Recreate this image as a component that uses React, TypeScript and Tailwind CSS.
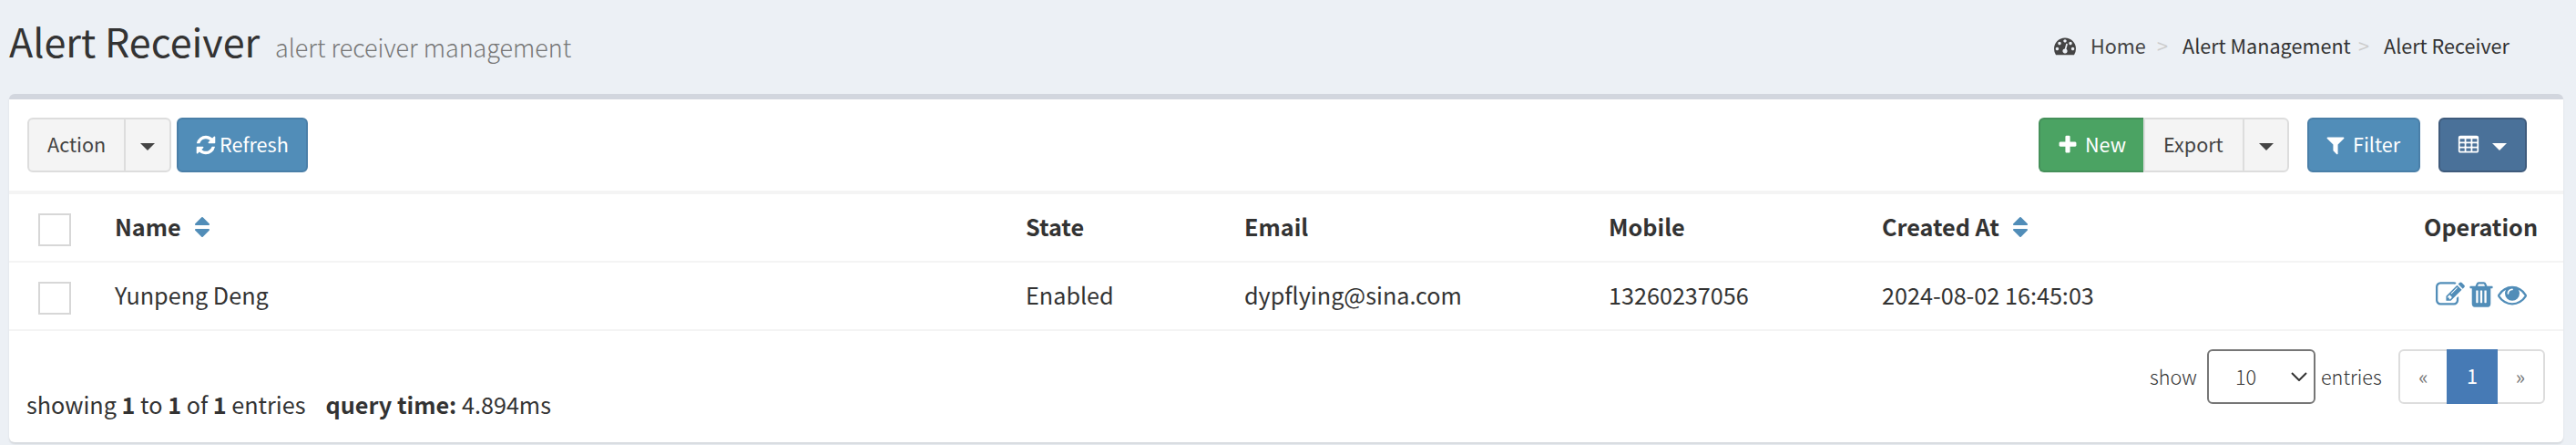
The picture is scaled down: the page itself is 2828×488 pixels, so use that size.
import React from "react";

const ICONS = {
  refresh:
    "M1639 1056q0 5-1 7-64 268-268 434.5t-478 166.5q-146 0-282.5-55t-243.5-157l-129 129q-19 19-45 19t-45-19-19-45v-448q0-26 19-45t45-19h448q26 0 45 19t19 45-19 45l-137 137q71 66 161 102t187 36q134 0 250-65t186-179q11-17 53-117 8-23 30-23h192q13 0 22.5 9.5t9.5 22.5zm25-800v448q0 26-19 45t-45 19h-448q-26 0-45-19t-19-45 19-45l138-138q-148-137-349-137-134 0-250 65t-186 179q-11 17-53 117-8 23-30 23h-199q-13 0-22.5-9.5t-9.5-22.5v-7q65-268 270-434.5t480-166.5q146 0 284 55.5t245 156.5l130-129q19-19 45-19t45 19 19 45z",
  plus: "M1600 736v192q0 40-28 68t-68 28h-416v416q0 40-28 68t-68 28h-192q-40 0-68-28t-28-68v-416h-416q-40 0-68-28t-28-68v-192q0-40 28-68t68-28h416v-416q0-40 28-68t68-28h192q40 0 68 28t28 68v416h416q40 0 68 28t28 68z",
  filter:
    "M1595 295q17 41-14 70l-493 493v742q0 42-39 59-13 5-25 5-27 0-45-19l-256-256q-19-19-19-45v-486l-493-493q-31-29-14-70 17-39 59-39h1280q42 0 59 39z",
  eye: "M1664 960q-152-236-381-353 61 104 61 225 0 185-131.5 316.5t-316.5 131.5-316.5-131.5-131.5-316.5q0-121 61-225-229 117-381 353 133 205 333.5 326.5t434.5 121.5 434.5-121.5 333.5-326.5zm-720-384q0-20-14-34t-34-14q-125 0-214.5 89.5t-89.5 214.5q0 20 14 34t34 14 34-14 14-34q0-86 61-147t147-61q20 0 34-14t14-34zm848 384q0 34-20 69-140 230-376.5 368.5t-499.5 138.5-499.5-139-376.5-368q-20-35-20-69t20-69q140-229 376.5-368t499.5-139 499.5 139 376.5 368q20 35 20 69z",
  trash:
    "M704 1376v-704q0-14-9-23t-23-9h-64q-14 0-23 9t-9 23v704q0 14 9 23t23 9h64q14 0 23-9t9-23zm256 0v-704q0-14-9-23t-23-9h-64q-14 0-23 9t-9 23v704q0 14 9 23t23 9h64q14 0 23-9t9-23zm256 0v-704q0-14-9-23t-23-9h-64q-14 0-23 9t-9 23v704q0 14 9 23t23 9h64q14 0 23-9t9-23zm-544-992h448l-48-117q-7-9-17-11h-317q-10 2-17 11zm928 32v64q0 14-9 23t-23 9h-96v948q0 83-47 143.5t-113 60.5h-832q-66 0-113-58.5t-47-141.5v-952h-96q-14 0-23-9t-9-23v-64q0-14 9-23t23-9h309l70-167q15-37 54-63t79-26h320q40 0 79 26t54 63l70 167h309q14 0 23 9t9 23z",
  edit: "M888 1184l116-116-152-152-116 116v56h96v96h56zm440-720q-16-16-33 1l-350 350q-17 17-1 33t33-1l350-350q17-17 1-33zm80 594v190q0 119-84.5 203.5t-203.5 84.5h-832q-119 0-203.5-84.5t-84.5-203.5v-832q0-119 84.5-203.5t203.5-84.5h832q63 0 117 25 15 7 18 23 3 17-9 29l-49 49q-14 14-32 8-23-6-45-6h-832q-66 0-113 47t-47 113v832q0 66 47 113t113 47h832q66 0 113-47t47-113v-126q0-13 9-22l64-64q15-15 35-7t20 29zm-96-738l288 288-672 672h-288v-288zm444 132l-92 92-288-288 92-92q28-28 68-28t68 28l152 152q28 28 28 68t-28 68z",
  dashboard:
    "M384 1152q0-53-37.5-90.5t-90.5-37.5-90.5 37.5-37.5 90.5 37.5 90.5 90.5 37.5 90.5-37.5 37.5-90.5zm192-448q0-53-37.5-90.5t-90.5-37.5-90.5 37.5-37.5 90.5 37.5 90.5 90.5 37.5 90.5-37.5 37.5-90.5zm428 481l101-382q6-26-7.5-48.5t-38.5-29.5-48 6.5-30 39.5l-101 382q-60 5-107 43.5t-63 98.5q-20 77 20 146t117 89 146-20 89-117q16-60-6-117t-72-91zm660-33q0-53-37.5-90.5t-90.5-37.5-90.5 37.5-37.5 90.5 37.5 90.5 90.5 37.5 90.5-37.5 37.5-90.5zm-640-640q0-53-37.5-90.5t-90.5-37.5-90.5 37.5-37.5 90.5 37.5 90.5 90.5 37.5 90.5-37.5 37.5-90.5zm448 192q0-53-37.5-90.5t-90.5-37.5-90.5 37.5-37.5 90.5 37.5 90.5 90.5 37.5 90.5-37.5 37.5-90.5zm320 448q0 261-141 483-19 29-54 29h-1402q-35 0-54-29-141-221-141-483 0-182 71-348t191-286 286-191 348-71 348 71 286 191 191 286 71 348z",
  sort: "M1408 1088q0 19-19 45l-448 448q-19 19-45 19t-45-19l-448-448q-19-19-19-45t19-45 45-19h896q26 0 45 19t19 45zm0-384q0 26-19 45t-45 19h-896q-26 0-45-19t-19-45 19-45l448-448q19-19 45-19t45 19l448 448q19 19 19 45z",
  table:
    "M224 128h1344q66 0 113 47t47 113v1088q0 66-47 113t-113 47h-1344q-66 0-113-47t-47-113v-1088q0-66 47-113t113-47zM224 384q-32 0-32 32v192q0 32 32 32h320q32 0 32-32v-192q0-32-32-32zM736 384q-32 0-32 32v192q0 32 32 32h320q32 0 32-32v-192q0-32-32-32zM1248 384q-32 0-32 32v192q0 32 32 32h320q32 0 32-32v-192q0-32-32-32zM224 768q-32 0-32 32v192q0 32 32 32h320q32 0 32-32v-192q0-32-32-32zM736 768q-32 0-32 32v192q0 32 32 32h320q32 0 32-32v-192q0-32-32-32zM1248 768q-32 0-32 32v192q0 32 32 32h320q32 0 32-32v-192q0-32-32-32zM224 1152q-32 0-32 32v192q0 32 32 32h320q32 0 32-32v-192q0-32-32-32zM736 1152q-32 0-32 32v192q0 32 32 32h320q32 0 32-32v-192q0-32-32-32zM1248 1152q-32 0-32 32v192q0 32 32 32h320q32 0 32-32v-192q0-32-32-32z",
};

function Icon({ name, className }: { name: keyof typeof ICONS; className: string }) {
  return (
    <svg viewBox="0 0 1792 1792" className={`shrink-0 fill-current ${className}`} fillRule={name === "table" ? "evenodd" : "nonzero"}>
      <path d={ICONS[name]} />
    </svg>
  );
}

function Caret() {
  return (
    <svg viewBox="0 0 16 8" className="h-2 w-4 shrink-0 fill-current">
      <path d="M0 0h16l-8 8z" />
    </svg>
  );
}

const COLS = "grid grid-cols-[116px_1000px_240px_400px_300px_595px_153px]";

function Checkbox() {
  return <div className="ml-8 size-9 border-2 border-[#d7d7d7] bg-white" />;
}

export default function App() {
  return (
    <div className="h-[488px] w-[2828px] overflow-hidden bg-[#ecf0f5] font-['Noto_Sans_CJK_SC',sans-serif] text-[#333]">
      <header className="flex h-[103px] items-start pl-[10px]">
        <h1 className="flex items-baseline pt-5 text-[43.1px] leading-[48px] whitespace-nowrap">
          <span className="w-[292px]">Alert Receiver</span>
          <small className="text-[26.9px] font-light text-[#777]">alert receiver management</small>
        </h1>
        <nav className="ml-auto flex w-[573px] items-center pt-[35px] text-[21.6px] leading-[30px] whitespace-nowrap">
          <Icon name="dashboard" className="mr-4 size-6 text-[#444]" />
          <span className="w-[73px] text-[#444]">Home</span>
          <span className="w-[28px] text-[#ccc]">&gt;</span>
          <span className="w-[193px]">Alert Management</span>
          <span className="w-[28px] text-[#ccc]">&gt;</span>
          <span>Alert Receiver</span>
        </nav>
      </header>

      <main className="ml-[10px] h-[382px] w-[2804px] rounded-[6px] border-t-[6px] border-[#d2d6de] bg-white shadow-[0_2px_2px_rgba(0,0,0,0.1)]">
        <div className="flex h-[104px] items-start border-b-4 border-[#f4f4f4] px-5 pt-5 text-[21.6px] leading-[53px] whitespace-nowrap">
          <div className="flex h-[60px] w-[158px] rounded-[6px] border-2 border-[#ddd] bg-[#f4f4f4] text-[#444]">
            <div className="w-[106px] border-r-2 border-[#ddd] pl-5">Action</div>
            <div className="flex flex-1 items-center justify-center pt-1">
              <Caret />
            </div>
          </div>
          <button className="ml-[6px] flex h-[60px] w-[144px] items-start rounded-[6px] border-2 border-[#4a7fa8] bg-[#518db8] pl-[18px] text-white">
            <Icon name="refresh" className="mt-4 mr-[3px] size-6" />
            Refresh
          </button>

          <button className="ml-auto flex h-[60px] w-[115px] items-start rounded-l-[6px] border-2 border-r-0 border-[#45905a] bg-[#4ba363] pl-[18px] text-white">
            <Icon name="plus" className="mt-4 mr-[7px] size-6" />
            New
          </button>
          <div className="flex h-[60px] w-[160px] rounded-r-[6px] border-2 border-[#ddd] bg-[#f4f4f4] text-[#444]">
            <div className="w-[109px] border-r-2 border-[#ddd] pl-[20px]">Export</div>
            <div className="flex flex-1 items-center justify-center pt-1">
              <Caret />
            </div>
          </div>
          <button className="ml-5 flex h-[60px] w-[124px] items-start rounded-[6px] border-2 border-[#4a7fa8] bg-[#518db8] pl-[17px] text-white">
            <Icon name="filter" className="mt-4 mr-[7px] size-6" />
            Filter
          </button>
          <button className="mr-5 ml-5 flex h-[60px] w-[97px] items-start rounded-[6px] border-2 border-[#3f5b7c] bg-[#4a7199] pl-[19px] text-white">
            <Icon name="table" className="mt-[16px] mr-[14px] size-6" />
            <span className="pt-[26px]">
              <Caret />
            </span>
          </button>
        </div>

        <div className={`${COLS} h-[75px] items-center border-b-2 border-[#f4f4f4] text-[25.2px] leading-[36px] font-bold whitespace-nowrap`}>
          <div className="pt-[5px]">
            <Checkbox />
          </div>
          <div className="flex items-center pb-[3px]">
            Name
            <Icon name="sort" className="mt-[2px] ml-[9px] size-7 text-[#518db8]" />
          </div>
          <div className="pb-[3px]">State</div>
          <div className="pb-[3px]">Email</div>
          <div className="pb-[3px]">Mobile</div>
          <div className="flex items-center pb-[3px]">
            Created At
            <Icon name="sort" className="mt-[2px] ml-[9px] size-7 text-[#518db8]" />
          </div>
          <div className="pb-[3px]">Operation</div>
        </div>

        <div className={`${COLS} h-[75px] items-center border-b-2 border-[#f4f4f4] text-[25.2px] leading-[36px] whitespace-nowrap`}>
          <div className="pt-[5px]">
            <Checkbox />
          </div>
          <div className="pb-[3px]">Yunpeng Deng</div>
          <div className="pb-[3px]">Enabled</div>
          <div className="pb-[3px]">dypflying@sina.com</div>
          <div className="pb-[3px]">13260237056</div>
          <div className="pb-[3px]">2024-08-02 16:45:03</div>
          <div className="flex gap-[2px] pb-1 pl-[13px] text-[#518db8]">
            <Icon name="edit" className="size-8" />
            <Icon name="trash" className="size-8" />
            <Icon name="eye" className="size-8" />
          </div>
        </div>

        <footer className="flex items-start pl-[19px] whitespace-nowrap">
          <p className="pt-[62px] text-[25.2px] leading-[36px]">
            showing <b>1</b> to <b>1</b> of <b>1</b> entries
            <span className="inline-block w-[22px]" />
            <b>query time:</b> 4.894ms
          </p>
          <div className="mt-5 mr-5 ml-auto flex h-[60px] text-[21.6px] leading-[60px] font-light">
            <span className="w-[63px]">show</span>
            <div className="flex h-[60px] w-[119px] items-center rounded-[6px] border-2 border-[#767676] pl-[29px]">
              <span className="w-[61px]">10</span>
              <svg viewBox="0 0 18 10" className="h-[10px] w-[18px] fill-none stroke-[#333] stroke-2">
                <path d="M1 1l8 8 8-8" />
              </svg>
            </div>
            <span className="w-[91px] pl-[6px]">entries</span>
            <div className="flex h-[60px] w-[161px] rounded-[6px] border-2 border-[#ddd] font-normal text-[#777]">
              <span className="w-[51px] text-center leading-[56px]">«</span>
              <span className="-my-[2px] h-[60px] w-14 bg-[#467ab5] text-center leading-[58px] text-white">1</span>
              <span className="flex-1 text-center leading-[56px]">»</span>
            </div>
          </div>
        </footer>
      </main>
    </div>
  );
}
